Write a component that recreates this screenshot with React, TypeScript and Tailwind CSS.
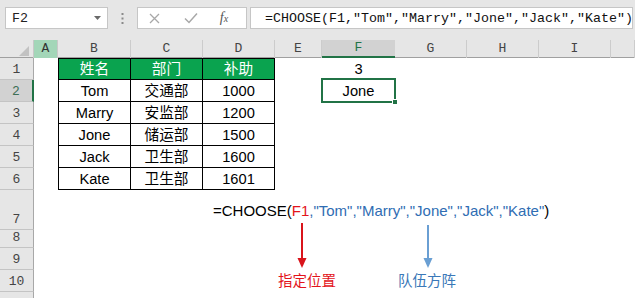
import React from "react";

const sans = "font-['Liberation_Sans','Noto_Sans_CJK_SC',sans-serif]";
const mono = "font-['Liberation_Mono','Noto_Sans_CJK_SC',monospace]";
const gridCols = "grid grid-cols-[34px_24px_73px_72px_72px_47px_73px_72px_72px_72px_1fr]";

const data: [string, string, string][] = [
  ["Tom", "交通部", "1000"],
  ["Marry", "安监部", "1200"],
  ["Jone", "储运部", "1500"],
  ["Jack", "卫生部", "1600"],
  ["Kate", "卫生部", "1601"],
];

function RowHeader({ n, selected }: { n: number; selected?: boolean }) {
  return (
    <div
      className={
        "flex items-end justify-center pb-[1px] border-b border-[#c4c4c4] text-[13px] leading-[16px] " +
        mono +
        (selected
          ? " bg-[#d2d2d2] border-r-2 border-r-[#217346] text-[#3d6f55]"
          : " bg-[#e6e6e6] border-r border-r-[#a8a8a8] text-[#444]")
      }
    >
      {n}
    </div>
  );
}

function TCell({
  children,
  first,
  head,
}: {
  children: React.ReactNode;
  first?: boolean;
  head?: boolean;
}) {
  return (
    <div
      className={
        "flex items-center justify-center border-r border-b border-black text-[14.67px] leading-[18px] " +
        (first ? "border-l " : "") +
        (head ? "border-t bg-[#0aa34f] text-white " : "text-black ")
      }
    >
      {children}
    </div>
  );
}

function Empty() {
  return <div />;
}

export default function App() {
  const letters = ["A", "B", "C", "D", "E", "F", "G", "H", "I", ""];
  return (
    <div className={"relative w-[635px] h-[298px] overflow-hidden bg-white " + sans}>
      {/* Formula bar */}
      <div className="h-[40px] bg-[#e6e6e6] flex items-start pt-[7px]">
        <div className="ml-[5px] w-[103px] h-[22px] bg-white border border-[#c6c6c6] flex items-center pl-[6px] pr-[6px]">
          <span className={mono + " text-[13.33px] text-[#222] pt-[1px]"}>F2</span>
          <svg className="ml-auto" width="7" height="4" viewBox="0 0 7 4">
            <path d="M0 0 L7 0 L3.5 4 Z" fill="#6a6a6a" />
          </svg>
        </div>
        <div className="w-[29px] h-[22px] flex justify-center items-center">
          <svg width="3" height="11" viewBox="0 0 3 11">
            <rect x="0.5" y="0" width="2" height="2" fill="#8a8a8a" />
            <rect x="0.5" y="4.5" width="2" height="2" fill="#8a8a8a" />
            <rect x="0.5" y="9" width="2" height="2" fill="#8a8a8a" />
          </svg>
        </div>
        <div className="w-[110px] h-[22px] bg-white border border-[#c6c6c6] flex items-center pl-[8px]">
          <div className="w-[16px] flex justify-center">
            <svg width="11" height="11" viewBox="0 0 11 11">
              <path d="M1 1 L10 10 M10 1 L1 10" stroke="#a8a8a8" strokeWidth="1.3" />
            </svg>
          </div>
          <div className="w-[16px] ml-[21px] flex justify-center">
            <svg width="14" height="12" viewBox="0 0 14 12">
              <path d="M1 6.5 L5 10.5 L13 1.5" stroke="#a8a8a8" strokeWidth="1.5" fill="none" />
            </svg>
          </div>
          <div className="w-[16px] ml-[17px] flex justify-center">
            <span className="font-['Liberation_Serif',serif] italic text-[14px] leading-[14px] text-[#555]">
              f<span className="text-[10px]">x</span>
            </span>
          </div>
        </div>
        <div className="ml-[3px] mr-[2px] flex-1 h-[22px] bg-white border border-[#c6c6c6] flex items-center pl-[14px] pt-[2px] overflow-hidden">
          <span className={mono + " text-[13.33px] text-[#111] whitespace-nowrap"}>
            =CHOOSE(F1,"Tom","Marry","Jone","Jack","Kate")
          </span>
        </div>
      </div>

      {/* Column headers */}
      <div className={gridCols + " h-[18px] bg-[#e6e6e6] border-b border-[#a0a0a0]"}>
        <div className="flex items-end justify-end pr-[4px] pb-[2px] border-r border-[#c8c8c8]">
          <svg width="10" height="10" viewBox="0 0 10 10">
            <path d="M10 0 L10 10 L0 10 Z" fill="#c2c2c2" />
          </svg>
        </div>
        {letters.map((l, i) => (
          <div
            key={i}
            className={
              "flex items-center justify-center text-[13px] leading-[16px] " +
              mono +
              (l === "A"
                ? " bg-[#a3d6b8] text-[#333] border-r border-[#c8c8c8]"
                : l === "F"
                ? " bg-[#d2d2d2] text-[#217346] border-b-2 border-[#217346]"
                : " text-[#444] border-r border-[#cccccc]")
            }
          >
            {l}
          </div>
        ))}
      </div>

      {/* Row 1: table header */}
      <div className={gridCols + " h-[22px]"}>
        <RowHeader n={1} />
        <Empty />
        <TCell first head>姓名</TCell>
        <TCell head>部门</TCell>
        <TCell head>补助</TCell>
        <Empty />
        <div className="flex items-center justify-center text-[14.67px] text-black">3</div>
        <Empty />
        <Empty />
        <Empty />
        <Empty />
      </div>

      {data.map((r, idx) => (
        <div key={idx} className={gridCols + " h-[22px]"}>
          <RowHeader n={idx + 2} selected={idx === 0} />
          <Empty />
          <TCell first>{r[0]}</TCell>
          <TCell>{r[1]}</TCell>
          <TCell>{r[2]}</TCell>
          <Empty />
          {idx === 0 ? (
            <div className="relative flex items-center justify-center text-[14.67px] text-black">
              Jone
              <div className="absolute -top-[2px] -left-[1px] -right-[1px] -bottom-[1px] border-2 border-[#217346]" />
              <div className="absolute -right-[3px] -bottom-[3px] w-[6px] h-[6px] bg-[#217346] border border-white" />
            </div>
          ) : (
            <Empty />
          )}
          <Empty />
          <Empty />
          <Empty />
          <Empty />
        </div>
      ))}

      <div className={gridCols + " h-[40px]"}>
        <RowHeader n={7} />
      </div>
      <div className={gridCols + " h-[18px]"}>
        <RowHeader n={8} />
      </div>
      <div className={gridCols + " h-[22px]"}>
        <RowHeader n={9} />
      </div>
      <div className={gridCols + " h-[22px]"}>
        <RowHeader n={10} />
      </div>
      <div className={gridCols + " h-[22px]"}>
        <RowHeader n={11} />
      </div>

      {/* Annotation floating over the sheet */}
      <div className="absolute left-[213px] top-[202px] text-[15px] leading-[17px] whitespace-nowrap text-black">
        =CHOOSE(<span className="text-[#e3141b]">F1</span>
        <span className="text-[#2f6db3]">,"Tom","Marry","Jone","Jack","Kate"</span>)
      </div>
      <svg className="absolute left-[296px] top-[223px]" width="12" height="46" viewBox="0 0 12 46">
        <rect x="5" y="0" width="2" height="37" fill="#d9141b" />
        <path d="M1.5 35 L10.5 35 L6 45 Z" fill="#d9141b" />
      </svg>
      <svg className="absolute left-[422px] top-[225px]" width="12" height="44" viewBox="0 0 12 44">
        <rect x="5" y="0" width="2" height="35" fill="#6a9fd3" />
        <path d="M1.5 33 L10.5 33 L6 43 Z" fill="#6a9fd3" />
      </svg>
      <div className="absolute left-[278px] top-[270px] text-[14.5px] leading-[20px] text-[#e3141b] font-['Noto_Sans_CJK_SC',sans-serif]">
        指定位置
      </div>
      <div className="absolute left-[398px] top-[270px] text-[14.5px] leading-[20px] text-[#3a78b8] font-['Noto_Sans_CJK_SC',sans-serif]">
        队伍方阵
      </div>
    </div>
  );
}
